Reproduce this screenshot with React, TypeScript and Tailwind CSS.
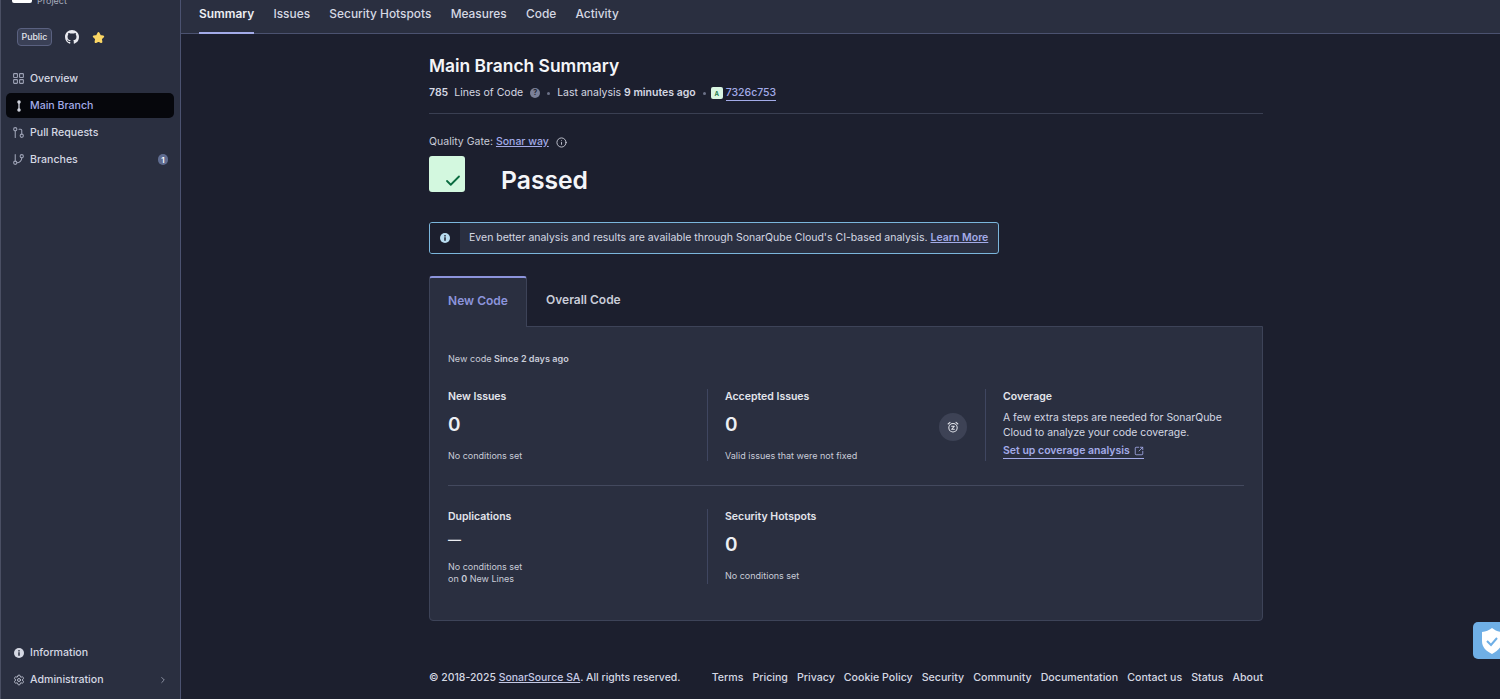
import React from "react";
import { Settings, ChevronRight, LayoutGrid, GitPullRequest, GitBranch, Check, Info, SquareArrowOutUpRight } from "lucide-react";

const Github = () => (
  <svg viewBox="0 0 16 16" width="14" height="14" fill="#e8e9ef"><path d="M8 0C3.58 0 0 3.58 0 8c0 3.54 2.29 6.53 5.47 7.59.4.07.55-.17.55-.38 0-.19-.01-.82-.01-1.49-2.01.37-2.53-.49-2.69-.94-.09-.23-.48-.94-.82-1.13-.28-.15-.68-.52-.01-.53.63-.01 1.08.58 1.23.82.72 1.21 1.87.87 2.33.66.07-.52.28-.87.51-1.07-1.78-.2-3.64-.89-3.64-3.95 0-.87.31-1.59.82-2.15-.08-.2-.36-1.02.08-2.12 0 0 .67-.21 2.2.82.64-.18 1.32-.27 2-.27s1.36.09 2 .27c1.53-1.04 2.2-.82 2.2-.82.44 1.1.16 1.92.08 2.12.51.56.82 1.27.82 2.15 0 3.07-1.87 3.75-3.65 3.95.29.25.54.73.54 1.48 0 1.07-.01 1.93-.01 2.2 0 .21.15.46.55.38A8.01 8.01 0 0 0 16 8c0-4.42-3.58-8-8-8z" /></svg>
);

const Star = () => (
  <svg viewBox="0 0 24 24" width="13" height="13" fill="#fcd765" stroke="#fcd765" strokeWidth="4" strokeLinejoin="round"><path d="M12 4l2.6 5.4 5.9.8-4.3 4.1 1 5.9L12 17.4l-5.2 2.8 1-5.900-4.3-4.100 5.900-.8z" /></svg>
);

const InfoFilled = ({ size, color, hole }: { size: number; color: string; hole: string }) => (
  <svg viewBox="0 0 16 16" width={size} height={size}>
    <circle cx="8" cy="8" r="8" fill={color} />
    <rect x="6.8" y="6.8" width="2.4" height="5.6" fill={hole} />
    <rect x="6.8" y="3.4" width="2.4" height="2.2" fill={hole} />
  </svg>
);

const BranchLine = () => (
  <svg viewBox="0 0 12 12" width="12" height="12" fill="none" stroke="#d5d8e3" strokeWidth="1.3"><path d="M6 2.5v7" /><circle cx="6" cy="2" r="1.1" fill="#d5d8e3" /><circle cx="6" cy="10" r="1.1" fill="#d5d8e3" /></svg>
);

const Snooze = () => (
  <svg viewBox="0 0 16 16" width="12" height="12" fill="none" stroke="#e3e5ec" strokeWidth="1.4" strokeLinecap="round" strokeLinejoin="round">
    <circle cx="8" cy="9" r="5.6" />
    <path d="M1.5 4L4 1.8M14.5 4L12 1.8" />
    <path d="M6.2 7h3.6L6.2 11h3.6" />
  </svg>
);

const Nav = ({ icon, label, active, right }: { icon: React.ReactNode; label: string; active?: boolean; right?: React.ReactNode }) => (
  <div className={`ml-[5px] mr-[6px] h-[25px] rounded-[5px] pl-[6px] pr-[6px] flex items-center gap-[5px] text-[10.6px] font-medium ${active ? "bg-[#06070c] text-[#a3abe8]" : "text-[#d5d8e3]"}`}>
    <span className="w-[13px] flex justify-center">{icon}</span>
    <span className="flex-1">{label}</span>
    {right}
  </div>
);

const Stat = ({ title, value, note, className = "" }: { title: string; value: string; note: React.ReactNode; className?: string }) => (
  <div className={className}>
    <div className="text-[10.5px] leading-[14px] font-semibold text-[#e3e5ec]">{title}</div>
    <div className="mt-[9px] text-[19px] leading-[24px] font-semibold text-[#eceef3]">{value}</div>
    <div className="mt-[13px] text-[9px] leading-[12px] text-[#c9ccd8]">{note}</div>
  </div>
);

const Sep = () => <span className="w-[3px] h-[3px] rounded-full bg-[#6c7288] mx-[7px]" />;

export default function App() {
  return (
    <div className="h-[699px] w-[1500px] overflow-hidden flex bg-[#1c1f2e] text-[#d5d8e3]" style={{ fontFamily: "Inter, 'Liberation Sans', sans-serif" }}>
      <aside className="w-[181px] h-full shrink-0 flex flex-col bg-[#2a2f40] border-r border-r-[#4b5270] border-l border-l-[#4a4f63]">
        <div className="h-[7px] flex items-start pl-[11px] relative">
          <div className="w-[20px] h-[3px] bg-white rounded-b-[2px]" />
          <div className="ml-[5px] -mt-[5px] text-[9px] leading-[12px] text-[#a8adbe]">Project</div>
        </div>
        <div className="mt-[21px] pl-[16px] flex items-center h-[18px]">
          <span className="h-[18px] px-[3.5px] flex items-center rounded-[4px] border border-[#5a6180] bg-[#3a4056] text-[8.8px] font-medium text-[#e3e5ec]">Public</span>
          <span className="ml-[13px] flex"><Github /></span>
          <span className="ml-[13px] flex"><Star /></span>
        </div>
        <div className="mt-[20px] flex flex-col gap-[2px]">
          <Nav icon={<LayoutGrid size={13} color="#9da2b5" />} label="Overview" />
          <Nav active icon={<BranchLine />} label="Main Branch" />
          <Nav icon={<GitPullRequest size={13} color="#9da2b5" />} label="Pull Requests" />
          <Nav icon={<GitBranch size={13} color="#9da2b5" />} label="Branches" right={<span className="w-[10px] h-[11px] rounded-full bg-[#5f6c90] text-[8px] font-semibold text-white flex items-center justify-center">1</span>} />
        </div>
        <div className="mt-auto mb-[7px] flex flex-col gap-[2px]">
          <Nav icon={<InfoFilled size={10} color="#d5d8e3" hole="#2a2f40" />} label="Information" />
          <Nav icon={<Settings size={12} color="#b8bccb" />} label="Administration" right={<ChevronRight size={10} color="#9da2b5" />} />
        </div>
      </aside>

      <div className="flex-1 min-w-0 flex flex-col relative">
        <nav className="h-[34px] shrink-0 bg-[#2a2f40] border-b border-[#4b5270] pl-[18px] flex gap-[19.3px] text-[11.9px] font-medium text-[#d5d8e3]">
          <span className="h-[34px] pt-[5px] border-b-2 border-[#a3abe8] text-[#eceef3] font-semibold">Summary</span>
          <span className="pt-[5px]">Issues</span>
          <span className="pt-[5px]">Security Hotspots</span>
          <span className="pt-[5px]">Measures</span>
          <span className="pt-[5px]">Code</span>
          <span className="pt-[5px]">Activity</span>
        </nav>

        <main className="ml-[248px] w-[834px] flex-1 flex flex-col">
          <h1 className="mt-[21px] text-[17.4px] leading-[22px] font-semibold text-[#f4f5f8]">Main Branch Summary</h1>
          <div className="mt-[9px] h-[14px] flex items-center text-[10.5px] text-[#d5d8e3]">
            <b className="font-semibold">785</b>
            <span className="ml-[6px]">Lines of Code</span>
            <span className="ml-[7px] w-[10px] h-[10px] rounded-full bg-[#7a8098] text-[7px] font-bold text-[#1c1f2e] flex items-center justify-center">?</span>
            <Sep />
            <span>Last analysis <b className="font-semibold">9 minutes ago</b></span>
            <Sep />
            <span className="-ml-[2px] w-[12px] h-[12px] rounded-[2px] bg-[#d9f6e2] text-[6px] font-bold text-[#1f7a4c] flex items-center justify-center">A</span>
            <span className="ml-[3px] text-[#a3abe8] font-medium border-b border-[#a3abe8] leading-[14px]">7326c753</span>
          </div>
          <div className="mt-[13px] h-px bg-[#3a3f52]" />
          <div className="mt-[21px] h-[14px] flex items-center text-[10.5px]">
            <span className="text-[#c9ccd8]">Quality Gate:</span>
            <span className="ml-[3px] text-[#a3abe8] font-medium underline">Sonar way</span>
            <Info size={11} className="ml-[7px]" color="#c9ccd8" />
          </div>
          <div className="mt-[7px] flex items-start">
            <div className="w-[36px] h-[36px] rounded-[3px] bg-[#d3f8df] flex items-end justify-end pr-[3px] pb-[2px]">
              <Check size={18} color="#0a6b3f" strokeWidth={2.4} />
            </div>
            <div className="ml-[36px] mt-[6px] text-[24.7px] leading-[36px] font-semibold text-[#f4f5f8]">Passed</div>
          </div>

          <div className="mt-[24px] w-[570px] h-[32px] rounded-[3px] border border-[#7bb6dc] flex bg-[#2a2f40] overflow-hidden">
            <div className="w-[30px] bg-[#1c1f2e] flex items-center justify-center">
              <InfoFilled size={10} color="#b9dcf0" hole="#1c1f2e" />
            </div>
            <div className="ml-[9px] flex items-center whitespace-nowrap text-[10.5px] text-[#d5d8e3]">
              Even better analysis and results are available through SonarQube Cloud's CI-based analysis.
              <span className="ml-[3px] font-semibold text-[#a3abe8] underline">Learn More</span>
            </div>
          </div>

          <div className="mt-[22px] flex h-[51px]">
            <div className="w-[98px] h-[51px] bg-[#2a2f40] rounded-t-[3px] border-t-2 border-t-[#8c94dc] border-x border-x-[#3d4358] flex items-center justify-center pb-[3px] text-[12px] font-semibold text-[#8c94dc] relative z-10">New Code</div>
            <div className="ml-[19px] flex items-center pb-[3px] text-[12px] font-semibold text-[#c9ccd8]">Overall Code</div>
          </div>
          <section className="h-[295px] -mt-px rounded-b-[4px] border border-[#3d4358] bg-[#2a2f40] px-[18px] pt-[26px]">
            <div className="text-[9.1px] leading-[12px] text-[#c9ccd8]">New code <b className="font-semibold">Since 2 days ago</b></div>
            <div className="mt-[24px] flex h-[72px]">
              <Stat className="w-[259px] pt-[1px]" title="New Issues" value="0" note="No conditions set" />
              <div className="w-[278px] border-l border-[#3f4660] pl-[17px] pt-[1px] relative">
                <Stat title="Accepted Issues" value="0" note="Valid issues that were not fixed" />
                <div className="absolute right-[18px] top-[24px] w-[28px] h-[28px] rounded-full bg-[#3d4255] flex items-center justify-center">
                  <Snooze />
                </div>
              </div>
              <div className="flex-1 border-l border-[#3f4660] pl-[17px] pt-[1px]">
                <div className="text-[10.5px] leading-[14px] font-semibold text-[#e3e5ec]">Coverage</div>
                <div className="mt-[6px] w-[235px] text-[10.4px] leading-[15px] text-[#d5d8e3]">A few extra steps are needed for SonarQube Cloud to analyze your code coverage.</div>
                <div className="mt-[4px] flex items-center w-fit border-b border-[#a3abe8] font-semibold text-[10.5px] text-[#a3abe8] leading-[14px]">Set up coverage analysis<SquareArrowOutUpRight size={10} className="ml-[4px]" /></div>
              </div>
            </div>
            <div className="mt-[24px] h-px bg-[#43495e]" />
            <div className="mt-[23px] flex h-[75px]">
              <div className="w-[259px] pt-[1px]">
                <div className="text-[10.5px] leading-[14px] font-semibold text-[#e3e5ec]">Duplications</div>
                <div className="mt-[3px] text-[13px] leading-[24px] font-medium text-[#eceef3]">—</div>
                <div className="mt-[10px] text-[9px] leading-[12px] text-[#c9ccd8]">No conditions set<br />on <b className="font-semibold">0</b> New Lines</div>
              </div>
              <Stat className="flex-1 border-l border-[#3f4660] pl-[17px] pt-[1px]" title="Security Hotspots" value="0" note="No conditions set" />
            </div>
          </section>
          <footer className="mt-auto mb-[13px] flex items-center text-[10.45px] font-medium text-[#d5d8e3]">
            <span>© 2018-2025 <span className="underline text-[#c5c9e6]">SonarSource SA</span>. All rights reserved.</span>
            <div className="ml-auto flex gap-[9px] text-[10.63px]">
              {["Terms", "Pricing", "Privacy", "Cookie Policy", "Security", "Community", "Documentation", "Contact us", "Status", "About"].map((t) => <span key={t}>{t}</span>)}
            </div>
          </footer>
        </main>

        <div className="absolute right-0 top-[622px] w-[27px] h-[37px] bg-[#6fafe6] rounded-l-[5px] flex items-center pl-[6px] overflow-hidden">
          <svg viewBox="0 0 24 28" width="26" height="28" className="shrink-0"><path d="M12 1c3 2.500 6 3.500 10 4v9c0 6-4 10-10 13C6 24 2 20 2 14V5c4-.5 7-1.500 10-4z" fill="#fff" /><path d="M7 14l4 4 6-7" fill="none" stroke="#6fafe6" strokeWidth="2" /></svg>
        </div>
      </div>
    </div>
  );
}
